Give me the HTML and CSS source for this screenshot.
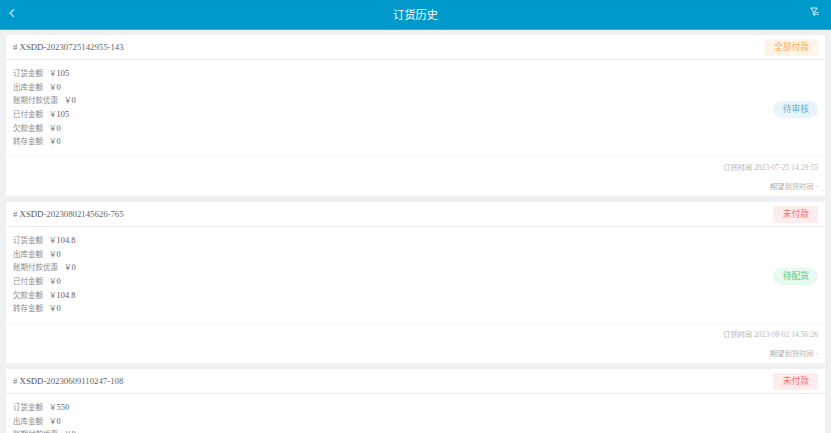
FILE: index.html
```html
<!DOCTYPE html>
<html lang="zh-CN">
<head>
<meta charset="utf-8">
<title>订货历史</title>
<link rel="stylesheet" href="styles.css">
</head>
<body>
<header class="topbar">
  <svg class="back" width="8" height="12" viewBox="0 0 8 12"><path d="M5.800 2.500 2 6l3.800 3.800" fill="none" stroke="#cfeaf6" stroke-width="1.200"/></svg>
  <h1 class="title">订货历史</h1>
  <svg class="filter" width="10" height="10" viewBox="0 0 10 10"><path d="M.7 1h6.600L5 4.300V8.500L3.300 7.500V4.300z" fill="none" stroke="#e8f5fb" stroke-width="1"/><path d="M6.500 5.500h2M6.500 7.500h2" stroke="#e8f5fb" stroke-width="1"/></svg>
</header>
<main class="list">
  <article class="card">
    <div class="card-head"><div class="order-no"><span class="hash">#</span> XSDD-<span class="dim">20230725142955-143</span></div><span class="pay pay-all">全部付款</span></div>
    <div class="card-body">
      <div class="rows">
        <div class="row"><span class="label">订货金额</span><span class="yen">￥</span><span class="red">105</span></div>
        <div class="row"><span class="label">出库金额</span><span class="yen">￥</span><span>0</span></div>
        <div class="row"><span class="label">账期付款优惠</span><span class="yen">￥</span><span>0</span></div>
        <div class="row"><span class="label">已付金额</span><span class="yen">￥</span><span class="red">105</span></div>
        <div class="row"><span class="label">欠款金额</span><span class="yen">￥</span><span>0</span></div>
        <div class="row"><span class="label">转存金额</span><span class="yen">￥</span><span>0</span></div>
      </div>
      <span class="status status-review">待审核</span>
    </div>
    <div class="card-foot">
      <div class="foot-line"><span class="cjk">订货时间</span> 2023-07-25 14:29:55</div>
      <div class="foot-line"><span class="cjk">期望到货时间</span> -</div>
    </div>
  </article>
  <article class="card">
    <div class="card-head"><div class="order-no"><span class="hash">#</span> XSDD-<span class="dim">20230802145626-765</span></div><span class="pay pay-none">未付款</span></div>
    <div class="card-body">
      <div class="rows">
        <div class="row"><span class="label">订货金额</span><span class="yen">￥</span><span class="red">104.8</span></div>
        <div class="row"><span class="label">出库金额</span><span class="yen">￥</span><span>0</span></div>
        <div class="row"><span class="label">账期付款优惠</span><span class="yen">￥</span><span>0</span></div>
        <div class="row"><span class="label">已付金额</span><span class="yen">￥</span><span>0</span></div>
        <div class="row"><span class="label">欠款金额</span><span class="yen">￥</span><span class="red">104.8</span></div>
        <div class="row"><span class="label">转存金额</span><span class="yen">￥</span><span>0</span></div>
      </div>
      <span class="status status-pick">待配货</span>
    </div>
    <div class="card-foot">
      <div class="foot-line"><span class="cjk">订货时间</span> 2023-08-02 14:56:26</div>
      <div class="foot-line"><span class="cjk">期望到货时间</span> -</div>
    </div>
  </article>
  <article class="card">
    <div class="card-head"><div class="order-no"><span class="hash">#</span> XSDD-<span class="dim">20230609110247-108</span></div><span class="pay pay-none">未付款</span></div>
    <div class="card-body">
      <div class="rows">
        <div class="row"><span class="label">订货金额</span><span class="yen">￥</span><span class="dark">550</span></div>
        <div class="row"><span class="label">出库金额</span><span class="yen">￥</span><span>0</span></div>
        <div class="row"><span class="label">账期付款优惠</span><span class="yen">￥</span><span>0</span></div>
      </div>
    </div>
  </article>
</main>
</body>
</html>
```
FILE: styles.css
```css
* { box-sizing: border-box; }
html, body { margin: 0; height: 100%; overflow: hidden; }
body {
  background: #eff0f2;
  font-family: "Liberation Serif", "Noto Sans CJK SC", serif;
  color: #555;
}
.topbar {
  height: 30px;
  background: #0099cc;
  border-bottom: 1px solid #33aed6;
  display: flex;
  align-items: center;
  justify-content: center;
  position: relative;
}
.back { position: absolute; left: 8px; top: 7px; }
.filter { position: absolute; left: 810px; top: 7px; }
.title {
  margin: 0;
  font: 400 11.300px/1 "Noto Sans CJK SC", sans-serif;
  color: #fff;
}
.list { padding: 5px 6px 0; display: flex; flex-direction: column; gap: 6.500px; }
.card { background: #fff; height: 160.500px; flex: none; }
.card-head {
  height: 24.500px;
  border-bottom: 1px solid #ebebeb;
  display: flex;
  align-items: center;
  justify-content: space-between;
  padding: 0 7px;
}
.order-no { font-size: 8.750px; color: #555; }
.hash { color: #777; }
.dim { color: #666; }
.pay {
  height: 17.500px;
  display: flex;
  align-items: center;
  padding: 0 9px;
  border-radius: 1px;
  font: 8.750px/1 "Noto Sans CJK SC", sans-serif;
  margin-top: 1px;
}
.pay-all { background: #fff4e6; color: #f7ab50; }
.pay-none { background: #ffecec; color: #f76f6f; padding: 0 9px 0 10px; }
.card-body {
  height: 97px;
  padding: 6.500px 7px 0;
  display: flex;
  align-items: center;
  justify-content: space-between;
  border-bottom: 1px solid #f5f5f5;
}
.rows { align-self: flex-start; }
.row { height: 13.670px; display: flex; align-items: baseline; font-size: 8.400px; line-height: 13.670px; color: #666; }
.label { font-family: "Noto Sans CJK SC", sans-serif; font-size: 7.500px; color: #8a8a8a; margin-right: 6px; }
.yen { color: #777; font-family: "Noto Sans CJK SC", sans-serif; font-size: 7.500px; }
.red { color: #7a5046; }
.dark { color: #666; }
.status {
  height: 17.500px;
  border-radius: 9px;
  display: flex;
  align-items: center;
  padding: 0 9px 0 10px;
  font: 8.750px/1 "Noto Sans CJK SC", sans-serif;
  margin-bottom: 3px;
}
.status-review { background: #e8f5fb; color: #62aed0; }
.status-pick { background: #e8f9ef; color: #4fca83; }
.card-foot { padding: 0 7px; }
.foot-line { text-align: right; font-size: 7.550px; color: #bbb; height: 18px; line-height: 21px; }
.foot-line + .foot-line { margin-top: 2px; line-height: 19px; }
.cjk { font-family: "Noto Sans CJK SC", sans-serif; font-size: 7.300px; color: #b0b0b0; }
```
